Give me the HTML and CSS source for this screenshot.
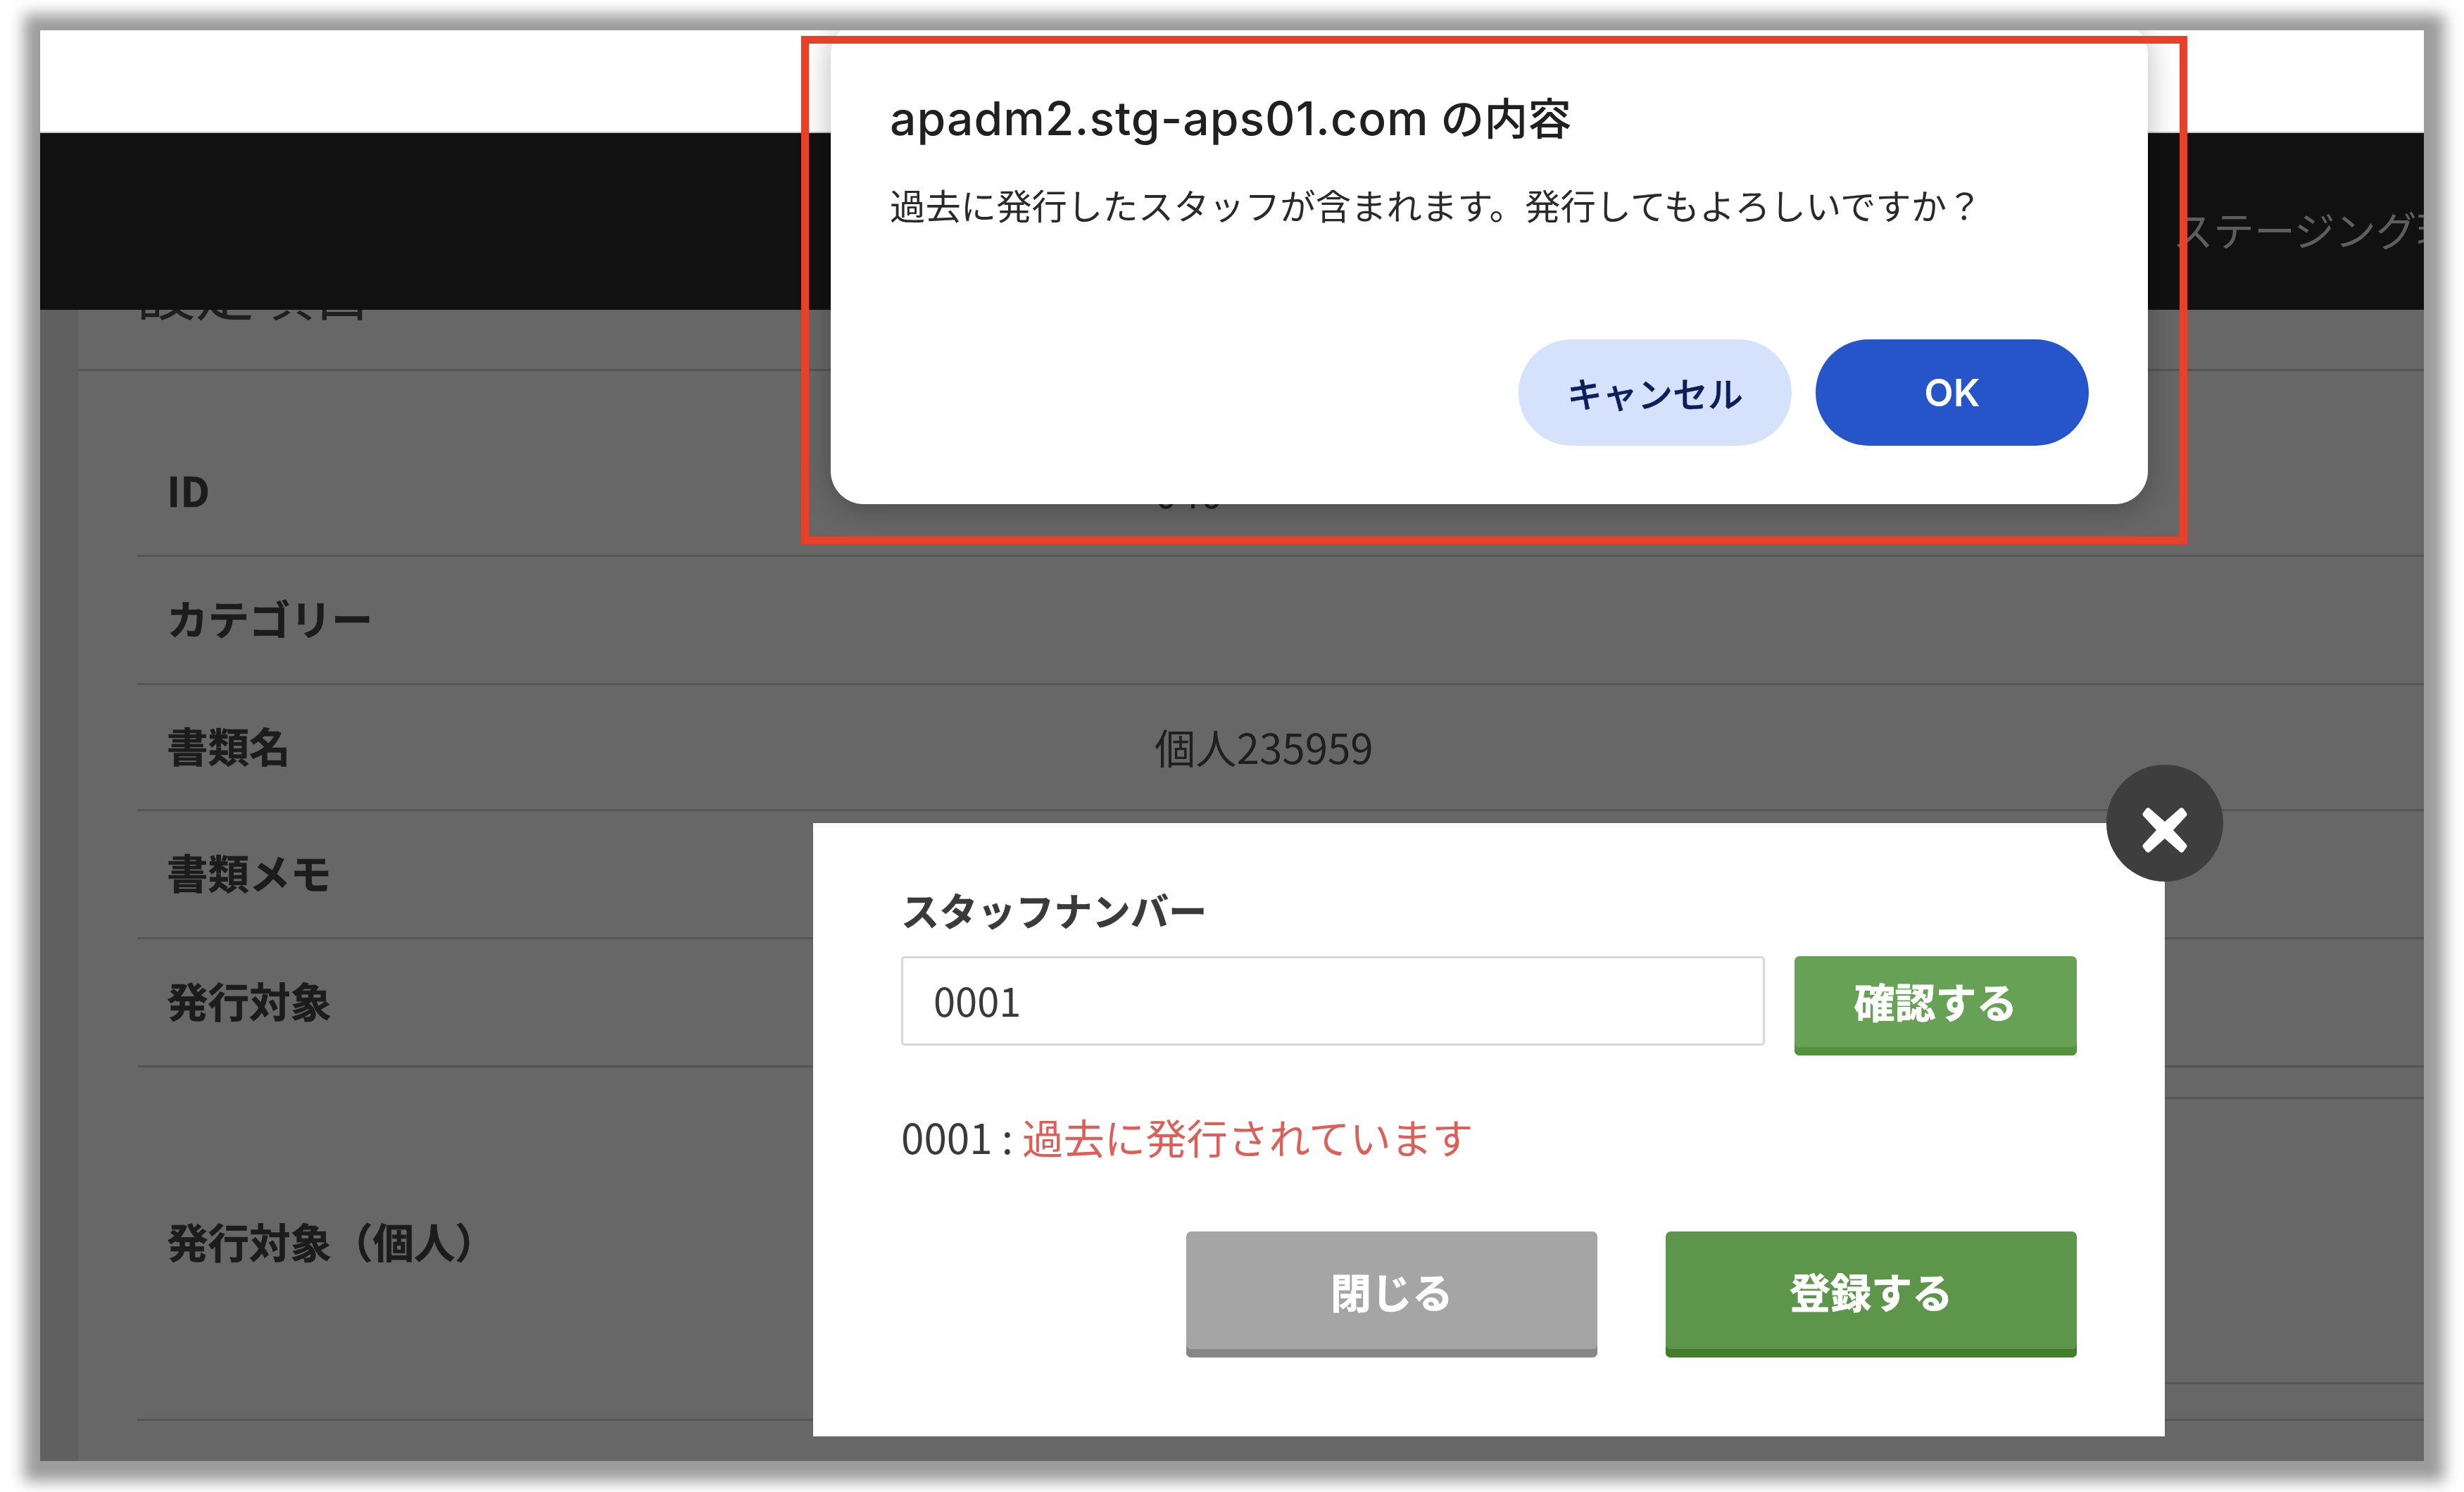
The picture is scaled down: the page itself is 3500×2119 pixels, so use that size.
FILE: index.html
```html
<!DOCTYPE html>
<html lang="ja">
<head>
<meta charset="utf-8">
<title>スタッフナンバー</title>
<link rel="stylesheet" href="styles.css">
</head>
<body>
<div class="screen">
  <div class="topbar"></div>
  <header class="header"><span class="env">ステージング環境</span></header>
  <main class="main">
    <h2 class="heading">設定項目</h2>
    <div class="rows">
      <div class="row"><div class="key">ID</div><div class="val">040</div></div>
      <div class="row"><div class="key">カテゴリー</div><div class="val"></div></div>
      <div class="row row-short"><div class="key">書類名</div><div class="val">個人235959</div></div>
      <div class="row"><div class="key">書類メモ</div><div class="val"></div></div>
      <div class="row"><div class="key">発行対象</div><div class="val"></div></div>
      <div class="row row-tall"><div class="key">発行対象（個人）</div><div class="val"><div class="nested"></div></div></div>
      <div class="row"><div class="key"></div><div class="val"><div class="stub"></div></div></div>
    </div>
  </main>

  <section class="modal">
    <button class="modal-x" aria-label="閉じる">
      <svg class="x-icon" viewBox="0 0 68 68"><path d="M13 3.500 34 22 55 3.500a4 4 0 0 1 5.500 0l4 5.500a4 4 0 0 1-.5 5.500L46 34l18 19.500a4 4 0 0 1 .5 5.500l-4 5.500a4 4 0 0 1-5.500 0L34 46 13 64.500a4 4 0 0 1-5.500 0l-4-5.500a4 4 0 0 1 .5-5.500L22 34 4 14.500A4 4 0 0 1 3.500 9l4-5.500a4 4 0 0 1 5.500 0z"/></svg>
    </button>
    <label class="field-label" for="staff">スタッフナンバー</label>
    <div class="field-row">
      <input class="field" id="staff" value="0001">
      <button class="btn btn-confirm">確認する</button>
    </div>
    <p class="result">0001 : <span class="warn">過去に発行されています</span></p>
    <div class="actions">
      <button class="btn btn-close">閉じる</button>
      <button class="btn btn-submit">登録する</button>
    </div>
  </section>

  <section class="dialog">
    <h1 class="dialog-title"><span class="domain">apadm2.stg-aps01.com</span> の内容</h1>
    <p class="dialog-text">過去に発行したスタッフが含まれます。発行してもよろしいですか？</p>
    <div class="dialog-actions">
      <button class="pill pill-cancel">キャンセル</button>
      <button class="pill pill-ok">OK</button>
    </div>
  </section>
</div>
<div class="callout"></div>
</body>
</html>
```
FILE: styles.css
```css
* { box-sizing: border-box; }
html, body { margin: 0; padding: 0; }
body {
  width: 3500px;
  height: 2119px;
  position: relative;
  overflow: hidden;
  background: #fff;
  font-family: "Noto Sans CJK JP", "Noto Sans", sans-serif;
  padding: 43px 57px 44px;
}
.screen {
  position: relative;
  width: 3386px;
  height: 2032px;
  overflow: hidden;
  background: #666;
  filter: blur(0.7px);
}
body::before {
  content: "";
  position: absolute;
  left: 57px;
  top: 43px;
  width: 3386px;
  height: 2032px;
  box-shadow: 3px 3px 20px 26px #9c9c9c;
}
.topbar { height: 146px; background: #fff; border-bottom: 2px solid #c8c8c8; }
.header {
  position: relative;
  z-index: 2;
  height: 251px;
  background: #111;
  padding: 106px 0 0 3029px;
  overflow: hidden;
  white-space: nowrap;
}
.env { color: #5e5e5e; font-size: 58px; line-height: 60px; display: block; }
.main {
  margin: -53px 0 0 0;
  padding-left: 54px;
  background: #606060;
  height: 1698px;
}
.main > * { background: #676767; }
.heading {
  margin: 0;
  height: 140px;
  padding-left: 83px;
  font-size: 83.500px;
  line-height: 50px;
  font-weight: 400;
  color: #1f1f1f;
  border-bottom: 3px solid #555;
}
.rows { padding: 82px 0 0 84px; height: 1558px; }
.row {
  display: flex;
  align-items: center;
  height: 182px;
  border-bottom: 3px solid #555;
}
.row-short { height: 179px; }
.row-tall { height: 502px; }
.key {
  width: 1445px;
  padding: 0 0 8px 42px;
  font-size: 58.500px;
  font-weight: 700;
  color: #1c1c1c;
  -webkit-text-stroke: 0.6px #1c1c1c;
}
.val { font-size: 58.300px; color: #1f1f1f; flex: 1; padding-bottom: 4px; }
.row-tall .val, .row:last-child .val { padding-bottom: 0; }
.nested { height: 408px; margin-top: -8px; border-top: 3px solid #555; border-bottom: 3px solid #555; }
.stub { height: 120px; margin-top: 88px; border: 3px solid #5a5a5a; border-radius: 6px; }

.modal {
  position: absolute;
  z-index: 3;
  left: 1098px;
  top: 1126px;
  width: 1920px;
  height: 871px;
  background: #fff;
  padding: 85px 125px 0 125px;
}
.modal-x {
  position: absolute;
  right: -83px;
  top: -83px;
  width: 166px;
  height: 166px;
  padding: 0;
  border: 0;
  border-radius: 50%;
  background: #3e3e3e;
  display: flex;
  align-items: center;
  justify-content: center;
}
.x-icon { width: 68px; height: 68px; fill: #fff; margin-top: 20px; }
.field-label {
  display: block;
  font-size: 54.300px;
  line-height: 76px;
  font-weight: 700;
  color: #3a3a3a;
  -webkit-text-stroke: 0.5px #3a3a3a;
}
.field-row { display: flex; gap: 42px; margin-top: 28px; }
.field {
  width: 1227px;
  height: 127px;
  border: 3px solid #d8d8d8;
  border-radius: 5px;
  padding: 0 0 4px 43px;
  font: 400 56px "Noto Sans CJK JP", sans-serif;
  color: #3a3a3a;
  background: #fff;
}
.btn {
  border: 0;
  border-radius: 7px;
  color: #fff;
  font: 700 58px "Noto Sans CJK JP", sans-serif;
  -webkit-text-stroke: 0.8px #fff;
  padding: 0 0 12px;
}
.btn-confirm { width: 401px; height: 141px; padding-bottom: 16px; background: #66a155; box-shadow: inset 0 -12px 0 #55923c; }
.result {
  margin: 73px 0 0;
  font-size: 58.400px;
  line-height: 84px;
  color: #3a3a3a;
}
.warn { color: #dd5f5a; }
.actions { display: flex; justify-content: flex-end; gap: 97px; margin-top: 93px; }
.btn-close, .btn-submit { width: 584px; height: 179px; }
.btn-close { background: #a5a5a5; box-shadow: inset 0 -12px 0 #878787; }
.btn-submit { background: #5d964b; box-shadow: inset 0 -12px 0 #437d2a; }

.dialog {
  position: absolute;
  z-index: 4;
  left: 1123px;
  top: -13px;
  width: 1871px;
  height: 686px;
  background: #fff;
  border-radius: 47px;
  padding: 96px 84px 83px 84px;
  box-shadow: 0 6px 44px rgba(0,0,0,.28);
  display: flex;
  flex-direction: column;
  font-family: Inter, "Noto Sans CJK JP", sans-serif;
}
.dialog-title {
  margin: 0;
  font-size: 62px;
  line-height: 84px;
  font-weight: 500;
  color: #202020;
}
.domain { font-size: 66px; letter-spacing: 1px; }
.dialog-text {
  margin: 47px 0 0;
  font-size: 50.400px;
  line-height: 70px;
  color: #2a2a2a;
}
.dialog-actions { margin-top: auto; display: flex; justify-content: flex-end; gap: 34px; }
.pill {
  width: 388px;
  height: 151px;
  border: 0;
  border-radius: 76px;
  font: 500 50px Inter, "Noto Sans CJK JP", sans-serif;
  -webkit-text-stroke: 0.5px currentColor;
  padding: 0 0 2px;
}
.pill-cancel { background: #d6e2fb; color: #0b1f5c; }
.pill-ok { background: #2655c9; color: #fff; font-size: 54px; font-weight: 600; -webkit-text-stroke: 0; padding: 0; }

.callout {
  position: absolute;
  z-index: 5;
  left: 1138px;
  top: 51px;
  width: 1969px;
  height: 722px;
  border: 11px solid #e8412a;
}
```
